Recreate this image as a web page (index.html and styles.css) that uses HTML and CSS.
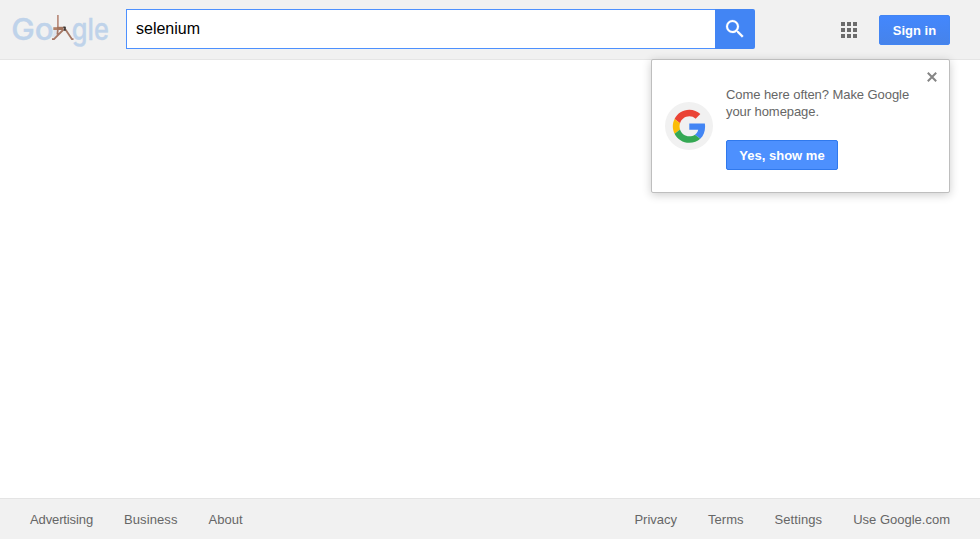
FILE: index.html
```
<!DOCTYPE html>
<html lang="en">
<head>
<meta charset="utf-8">
<title>selenium - Google Search</title>
<link rel="stylesheet" href="styles.css">
</head>
<body>
<header class="topbar">
  <a class="logo" aria-label="Google">
    <svg width="104" height="42" viewBox="10 10 104 42">
      <g class="logo-letters">
        <text x="11.3" y="39.9" textLength="42.5" lengthAdjust="spacingAndGlyphs">Go</text><text x="71.8" y="39.9" textLength="37" lengthAdjust="spacingAndGlyphs">gle</text>
      </g>
      <path d="M55 30v4M56 33l-3 4" stroke="#dce4ed" stroke-width="3" fill="none"/>
      <g fill="none" stroke-linejoin="round">
        <path d="M57.9 15v12.5" stroke="#b88b7b" stroke-width="1.7"/>
        <path d="M57 28.4h6.5" stroke="#a3745e" stroke-width="3.2"/>
        <path d="M63.5 29.5L54 39.2h-2M65.5 29.5l6.5 9.7h1.5M57.8 29.5l-.4 5" stroke="#a57866" stroke-width="1.8"/>
        <path d="M53.3 28.6h3.7" stroke="#b18068" stroke-width="2.8"/>
        <path d="M63.3 27.3h1.7v2.6h-1.2" stroke="#3f3632" stroke-width="1.7"/>
      </g>
    </svg>
  </a>
  <form class="search">
    <input class="search-input" type="text" value="selenium" aria-label="Search">
    <button class="search-button" type="button" aria-label="Search">
      <svg width="24" height="24" viewBox="0 0 24 24"><path fill="#fff" stroke="#fff" stroke-width=".2" d="M15.5 14h-.79l-.28-.27A6.47 6.47 0 0 0 16 9.5 6.5 6.5 0 1 0 9.5 16c1.61 0 3.09-.59 4.23-1.57l.27.28v.79l5 4.99L20.49 19l-4.99-5zm-6 0a4.5 4.5 0 1 1 0-9 4.5 4.5 0 0 1 0 9z"/></svg>
    </button>
  </form>
  <div class="account">
    <div class="apps"><i></i><i></i><i></i><i></i><i></i><i></i><i></i><i></i><i></i></div>
    <a class="signin">Sign in</a>
  </div>
  <aside class="promo">
    <svg class="promo-logo" width="48" height="48" viewBox="0 0 48 48">
      <circle cx="24" cy="24" r="24" fill="#f1f1f1"/>
      <g transform="translate(7.8 7.8) scale(.6875)">
        <path fill="#EA4335" d="M24 9.5c3.54 0 6.71 1.22 9.21 3.6l6.85-6.85C35.9 2.38 30.47 0 24 0 14.62 0 6.51 5.38 2.56 13.22l7.98 6.19C12.43 13.72 17.74 9.5 24 9.5z"/>
        <path fill="#4285F4" d="M46.98 24.55c0-1.57-.15-3.09-.38-4.55H24v9.02h12.94c-.58 2.96-2.26 5.48-4.78 7.18l7.73 6c4.51-4.18 7.09-10.36 7.09-17.65z"/>
        <path fill="#FBBC05" d="M10.53 28.59c-.48-1.45-.76-2.99-.76-4.59s.27-3.14.76-4.59l-7.98-6.19C.92 16.46 0 20.12 0 24c0 3.88.92 7.54 2.56 10.78l7.97-6.19z"/>
        <path fill="#34A853" d="M24 48c6.48 0 11.93-2.13 15.89-5.81l-7.73-6c-2.15 1.45-4.92 2.3-8.16 2.3-6.26 0-11.57-4.22-13.47-9.91l-7.98 6.19C6.51 42.62 14.62 48 24 48z"/>
      </g>
    </svg>
    <div class="promo-body">
      <p>Come here often? Make Google<br>your homepage.</p>
      <a class="promo-button">Yes, show me</a>
    </div>
    <svg class="close" width="12" height="10" viewBox="0 0 12 10"><path d="M1.8 .8l8.4 8.4M10.2 .8l-8.4 8.4" stroke="#858585" stroke-width="2"/></svg>
  </aside>
</header>
<main></main>
<footer class="footer">
  <nav class="footer-left"><a>Advertising</a><a>Business</a><a>About</a></nav>
  <nav class="footer-right"><a>Privacy</a><a>Terms</a><a>Settings</a><a>Use Google.com</a></nav>
</footer>
</body>
</html>
```
FILE: styles.css
```
* { box-sizing: border-box; }
body {
  margin: 0;
  height: 539px;
  display: flex;
  flex-direction: column;
  background: #fff;
  font-family: "Liberation Sans", Arial, sans-serif;
  font-size: 13px;
  color: #666;
}
main { flex: 1; }
.topbar {
  position: relative;
  display: flex;
  align-items: flex-start;
  height: 60px;
  padding: 9px 30px 0 10px;
  background: #f1f1f1;
  border-bottom: 1px solid #e5e5e5;
}
.logo { width: 116px; padding-top: 1px; }
.logo svg { display: block; }
.logo-letters {
  font-family: Inter, sans-serif;
  font-size: 30px;
  font-weight: 500;
  fill: #bfd3ea;
  stroke: #bfd3ea;
  stroke-width: .4px;
}
.search { display: flex; width: 629px; height: 40px; }
.search-input {
  flex: 1;
  min-width: 0;
  padding: 0 9px;
  border: 1px solid #4d90fe;
  border-right: 0;
  outline: 0;
  background: #fff;
  font: 16px "Liberation Sans", Arial, sans-serif;
  color: #000;
}
.search-button {
  width: 40px;
  padding: 0;
  display: flex;
  align-items: center;
  justify-content: center;
  border: 0;
  border-radius: 0 2px 2px 0;
  background: #4285f4;
}
.account {
  margin-left: auto;
  padding-top: 6px;
  display: flex;
  align-items: center;
  gap: 22px;
}
.apps { display: grid; grid-template-columns: repeat(3, 4px); gap: 2px; }
.apps i { height: 4px; background: #6c6c6c; }
.signin {
  width: 71px;
  height: 30px;
  border: 1px solid #4285f4;
  border-radius: 2px;
  background: linear-gradient(#4387fd, #4683ea);
  color: #fff;
  font-weight: bold;
  line-height: 29px;
  text-align: center;
}
.promo {
  position: absolute;
  top: 59px;
  right: 30px;
  width: 299px;
  height: 134px;
  display: flex;
  align-items: center;
  gap: 13px;
  padding: 0 13px;
  border: 1px solid #bebebe;
  border-radius: 2px;
  background: #fff;
  box-shadow: 0 2px 10px rgba(0, 0, 0, .2);
}
.promo-body { padding-top: 3px; }
.promo p { margin: 0 0 20px; line-height: 17px; white-space: nowrap; letter-spacing: -.07px; }
.promo-button {
  display: block;
  width: 112px;
  height: 30px;
  border: 1px solid #3079ed;
  border-radius: 2px;
  background: #4d90fe;
  color: #fff;
  font-weight: bold;
  line-height: 29px;
  text-align: center;
}
.close { position: absolute; top: 12px; right: 11px; }
.footer {
  display: flex;
  justify-content: space-between;
  height: 41px;
  padding: 0 30px;
  background: #f1f1f1;
  border-top: 1px solid #e4e4e4;
  line-height: 41px;
}
.footer nav { display: flex; gap: 31px; }
.footer-left a:first-child { letter-spacing: -.12px; }
.footer-left a:nth-child(2) { letter-spacing: .1px; }
.footer-right a:nth-child(3) { letter-spacing: .09px; }
```
